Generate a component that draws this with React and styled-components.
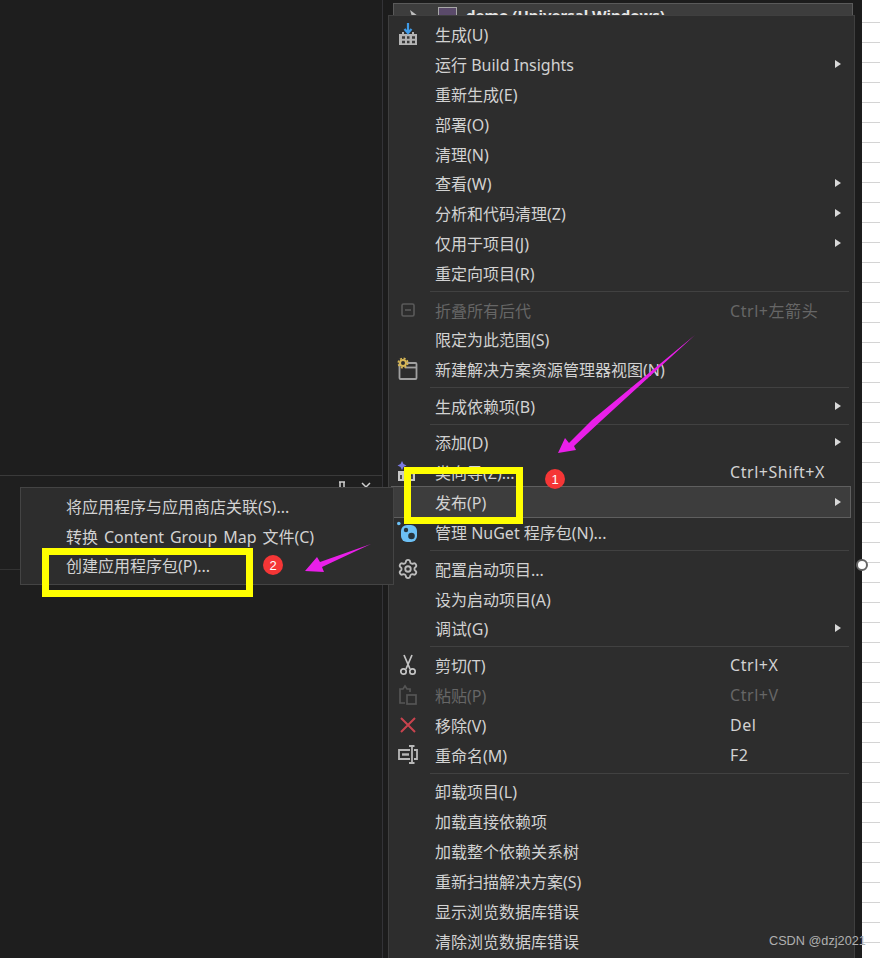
import React from "react";
import styled, { createGlobalStyle } from "styled-components";
import { Settings } from "lucide-react";

const GlobalStyle = createGlobalStyle`
  html, body { margin: 0; padding: 0; background: #1e1e1e; overflow: hidden; }
  body { font-family: "Noto Sans", "Noto Sans CJK SC", sans-serif; }
`;

const BuildIcon = () => (
  <svg width="22" height="24" viewBox="0 0 22 24">
    <path d="M2 12h3v-2h2v2h8v-2h2v2h3v11H2z" fill="#b4b4b4" />
    <path d="M5 15.500h3M10 15.500h2.500M15 15.500h3M5 20h3M10 20h2.500M15 20h3" stroke="#3a3a3a" strokeWidth="2.400" />
    <path d="M11 1v9M7.500 7l3.500 4 3.500-4" stroke="#3f9be8" strokeWidth="2.200" fill="none" />
  </svg>
);
const CollapseIcon = () => (
  <svg width="16" height="16" viewBox="0 0 16 16" fill="none" stroke="#5a5a5a" strokeWidth="1.600">
    <rect x="2" y="2" width="12" height="12" rx="1.500" />
    <path d="M5 8h6" />
  </svg>
);
const NewViewIcon = () => (
  <svg width="22" height="24" viewBox="0 0 22 24" fill="none">
    <rect x="2.500" y="6" width="17" height="16" rx="1" stroke="#a0a0a0" strokeWidth="1.800" />
    <path d="M8 10.500h11" stroke="#a0a0a0" strokeWidth="1.800" />
    <circle cx="6" cy="6" r="3" stroke="#d6b656" strokeWidth="2" fill="#2d2d2d" />
    <circle cx="6" cy="6" r="4.700" stroke="#d6b656" strokeWidth="1.600" strokeDasharray="2 1.700" />
  </svg>
);
const WizardIcon = () => (
  <svg width="22" height="24" viewBox="0 0 22 24" fill="none">
    <path d="M5 1l1.500 3 3 1.500-3 1.500L5 10 3.500 7 .500 5.500l3-1.500z" fill="#7a7ae0" />
    <rect x="1" y="11" width="17" height="10" fill="#c8c8c8" />
    <path d="M4 15v4M8 15v4M12 15h3v4" stroke="#2d2d2d" strokeWidth="1.600" />
  </svg>
);
const NuGetIcon = () => (
  <svg width="22" height="22" viewBox="0 0 22 22">
    <circle cx="1.800" cy="2.500" r="1.800" fill="#6cc0f5" />
    <rect x="4" y="4" width="16" height="17" rx="6" fill="#6cc0f5" />
    <circle cx="9" cy="9" r="2.200" fill="#26343d" />
    <circle cx="14.500" cy="15" r="3.300" fill="#26343d" />
  </svg>
);
const ScissorsIcon = () => (
  <svg width="18" height="22" viewBox="0 0 18 22" fill="none" stroke="#c4c4c4" strokeWidth="1.700">
    <path d="M5 1l6 14M13 1L7 15" />
    <circle cx="4.500" cy="17.500" r="2.700" />
    <circle cx="13.500" cy="17.500" r="2.700" />
  </svg>
);
const PasteIcon = () => (
  <svg width="20" height="22" viewBox="0 0 20 22" fill="none" stroke="#555" strokeWidth="1.700">
    <path d="M7 19H2V5h3l2-3 2 3h3v3" />
    <rect x="9" y="11" width="9" height="9" />
  </svg>
);
const RemoveIcon = () => (
  <svg width="18" height="18" viewBox="0 0 18 18" fill="none" stroke="#c8434e" strokeWidth="2">
    <path d="M2 2l14 14M16 2L2 16" />
  </svg>
);
const RenameIcon = () => (
  <svg width="22" height="20" viewBox="0 0 22 20" fill="none" stroke="#b8b8b8" strokeWidth="1.800">
    <path d="M13 5H2v9h11M17 5h3v9h-3" />
    <path d="M5 9.500h7" strokeWidth="2.400" />
    <path d="M12 1h2.500M17.500 1H15v17h2.500M12 18h3" />
  </svg>
);
const GearIcon = () => <Settings size={22} color="#bcbcbc" strokeWidth={2} />;

const sections = [
  [
    { label: "生成(U)", icon: <BuildIcon /> },
    { label: "运行 Build Insights", arrow: true },
    { label: "重新生成(E)" },
    { label: "部署(O)" },
    { label: "清理(N)" },
    { label: "查看(W)", arrow: true },
    { label: "分析和代码清理(Z)", arrow: true },
    { label: "仅用于项目(J)", arrow: true },
    { label: "重定向项目(R)" },
  ],
  [
    { label: "折叠所有后代", shortcut: "Ctrl+左箭头", disabled: true, icon: <CollapseIcon /> },
    { label: "限定为此范围(S)" },
    { label: "新建解决方案资源管理器视图(N)", icon: <NewViewIcon /> },
  ],
  [{ label: "生成依赖项(B)", arrow: true }],
  [
    { label: "添加(D)", arrow: true },
    { label: "类向导(Z)...", shortcut: "Ctrl+Shift+X", icon: <WizardIcon /> },
    { label: "发布(P)", arrow: true, active: true },
    { label: "管理 NuGet 程序包(N)...", icon: <NuGetIcon /> },
  ],
  [
    { label: "配置启动项目...", icon: <GearIcon /> },
    { label: "设为启动项目(A)" },
    { label: "调试(G)", arrow: true },
  ],
  [
    { label: "剪切(T)", shortcut: "Ctrl+X", icon: <ScissorsIcon /> },
    { label: "粘贴(P)", shortcut: "Ctrl+V", disabled: true, icon: <PasteIcon /> },
    { label: "移除(V)", shortcut: "Del", icon: <RemoveIcon /> },
    { label: "重命名(M)", shortcut: "F2", icon: <RenameIcon /> },
  ],
  [
    { label: "卸载项目(L)" },
    { label: "加载直接依赖项" },
    { label: "加载整个依赖关系树" },
    { label: "重新扫描解决方案(S)" },
    { label: "显示浏览数据库错误" },
    { label: "清除浏览数据库错误" },
  ],
];

const subItems = [
  "将应用程序与应用商店关联(S)...",
  "转换 Content Group Map 文件(C)",
  "创建应用程序包(P)...",
];

const App = () => (
  <Screen>
    <GlobalStyle />
    <LeftPane>
      <EditorArea />
      <ToolPanel>
        <PanelHeader>
          <svg width="12" height="12" viewBox="0 0 12 12" fill="none" stroke="#cfcfcf" strokeWidth="1.500">
            <path d="M3 1h6M4 1v6M8 1v6M2 7h8M6 7v5" />
          </svg>
          <svg width="12" height="12" viewBox="0 0 12 12" fill="none" stroke="#cfcfcf" strokeWidth="1.500">
            <path d="M2 2l8 8M10 2l-8 8" />
          </svg>
        </PanelHeader>
        <PanelBody />
      </ToolPanel>
    </LeftPane>
    <ExplorerPane>
      <SelectedRow>
        <svg width="12" height="12" viewBox="0 0 12 12">
          <path d="M2 1l8 6H6l-1 4z" fill="#bdbdbd" />
        </svg>
        <ProjectGlyph />
        <ProjectName>demo (Universal Windows)</ProjectName>
      </SelectedRow>
    </ExplorerPane>
    <Sheet>
      <SheetHandle />
    </Sheet>

    <ContextMenu>
      {sections.map((section, i) => (
        <React.Fragment key={i}>
          {i > 0 && <Separator />}
          {section.map((item) => (
            <Row key={item.label} $active={item.active} $disabled={item.disabled}>
              <IconSlot>{item.icon}</IconSlot>
              <Label>{item.label}</Label>
              <Shortcut>{item.shortcut}</Shortcut>
              {item.arrow && <Caret />}
            </Row>
          ))}
        </React.Fragment>
      ))}
    </ContextMenu>

    <SubMenu>
      {subItems.map((text) => (
        <SubRow key={text}>{text}</SubRow>
      ))}
    </SubMenu>

    <Highlight $x={404} $y={467} $w={119} $h={57} />
    <Highlight $x={42} $y={548} $w={211} $h={49} />
    <Badge $x={545} $y={469}>1</Badge>
    <Badge $x={263} $y={555}>2</Badge>
    <ArrowLayer viewBox="0 0 880 958">
      <polygon points="695,335 602,420 574,446 576,450 558,453 565,438 569,443 592,420" fill="#e91fe9" />
      <polygon points="371,544 322,567 324,572 305,571 317,557 320,562" fill="#e91fe9" />
    </ArrowLayer>
    <Watermark>CSDN @dzj2021</Watermark>
  </Screen>
);

const Screen = styled.div`
  position: relative;
  display: flex;
  width: 880px;
  height: 958px;
  overflow: hidden;
  background: #1e1e1e;
`;

const LeftPane = styled.div`
  display: flex;
  flex-direction: column;
  width: 382px;
  border-right: 1px solid #333337;
`;

const EditorArea = styled.div`
  height: 475px;
  background: #1e1e1e;
`;

const ToolPanel = styled.div`
  flex: 1;
  display: flex;
  flex-direction: column;
  border-top: 1px solid #3a3a3a;
  background: #1f1f1f;
`;

const PanelHeader = styled.div`
  display: flex;
  justify-content: flex-end;
  gap: 12px;
  height: 94px;
  padding: 5px 10px 0 0;
  box-sizing: border-box;
  border-bottom: 1px solid #333;
`;

const PanelBody = styled.div`
  flex: 1;
  background: #1e1e1e;
`;

const ExplorerPane = styled.div`
  width: 479px;
  padding: 3px 9px 0 10px;
  box-sizing: border-box;
  background: #1c1c1c;
`;

const SelectedRow = styled.div`
  display: flex;
  align-items: center;
  height: 24px;
  padding-left: 14px;
  gap: 18px;
  background: #3d3d3d;
  border: 1px solid #5a5a5a;
  box-sizing: border-box;
`;

const ProjectGlyph = styled.span`
  width: 19px;
  height: 16px;
  border: 1px solid #a8a8a8;
  background: #5a4a6a;
  box-sizing: border-box;
`;

const ProjectName = styled.span`
  color: #e6e6e6;
  font-size: 15px;
  font-weight: 700;
  margin-left: -9px;
`;

const Sheet = styled.div`
  position: relative;
  flex: 1;
  background-color: #fff;
  background-image: repeating-linear-gradient(
    to bottom,
    transparent 0,
    transparent 19px,
    #d4d4d4 19px,
    #d4d4d4 20px
  );
  background-position: 0 3px;
`;

const SheetHandle = styled.span`
  position: absolute;
  left: -6px;
  top: 559px;
  width: 12px;
  height: 12px;
  border: 2px solid #666;
  border-radius: 50%;
  background: #fff;
  box-sizing: border-box;
`;

const ContextMenu = styled.div`
  position: absolute;
  left: 388px;
  top: 15px;
  width: 467px;
  height: 950px;
  padding-top: 3px;
  box-sizing: border-box;
  background: #2d2d2d;
  border: 1px solid #3f3f3f;
`;

const Separator = styled.div`
  height: 1px;
  margin: 3px 5px 2.650px 41px;
  background: #414141;
`;

const Row = styled.div`
  position: relative;
  display: flex;
  align-items: center;
  height: 29.900px;
  margin: 0 4px 0 3px;
  box-sizing: border-box;
  font-size: 16px;
  color: ${(p) => (p.$disabled ? "#666" : "#d2d2d2")};
  background: ${(p) => (p.$active ? "#3d3d3d" : "transparent")};
  outline: ${(p) => (p.$active ? "1px solid #5f5f5f" : "none")};
`;

const IconSlot = styled.span`
  display: flex;
  align-items: center;
  justify-content: center;
  width: 32px;
  margin-right: 11px;
`;

const Label = styled.span`
  width: 295px;
  white-space: nowrap;
`;

const Shortcut = styled.span`
  white-space: nowrap;
  letter-spacing: 0.550px;
`;

const Caret = styled.span`
  position: absolute;
  right: 9px;
  top: 50%;
  transform: translateY(-50%);
  border-left: 6px solid #d8d8d8;
  border-top: 4.500px solid transparent;
  border-bottom: 4.500px solid transparent;
`;

const SubMenu = styled.div`
  position: absolute;
  left: 20px;
  top: 487px;
  width: 374px;
  height: 98px;
  padding-top: 3px;
  box-sizing: border-box;
  background: #2d2d2d;
  border: 1px solid #444;
`;

const SubRow = styled.div`
  display: flex;
  align-items: center;
  height: 29.700px;
  padding-left: 45px;
  font-size: 16px;
  word-spacing: 1.750px;
  white-space: nowrap;
  color: #d2d2d2;
`;

const Highlight = styled.div`
  position: absolute;
  left: ${(p) => p.$x}px;
  top: ${(p) => p.$y}px;
  width: ${(p) => p.$w}px;
  height: ${(p) => p.$h}px;
  border: 7px solid #ffff00;
  box-sizing: border-box;
`;

const Badge = styled.span`
  position: absolute;
  left: ${(p) => p.$x}px;
  top: ${(p) => p.$y}px;
  display: flex;
  align-items: center;
  justify-content: center;
  width: 20px;
  height: 20px;
  border-radius: 50%;
  background: #f53636;
  color: #fff;
  font-family: "Liberation Sans", sans-serif;
  font-size: 13px;
`;

const ArrowLayer = styled.svg`
  position: absolute;
  inset: 0;
  width: 880px;
  height: 958px;
  pointer-events: none;
`;

const Watermark = styled.span`
  position: absolute;
  left: 769px;
  top: 933px;
  font-family: "Liberation Sans", sans-serif;
  font-size: 12.700px;
  line-height: 16px;
  color: #b0b0b0;
`;

export default App;
